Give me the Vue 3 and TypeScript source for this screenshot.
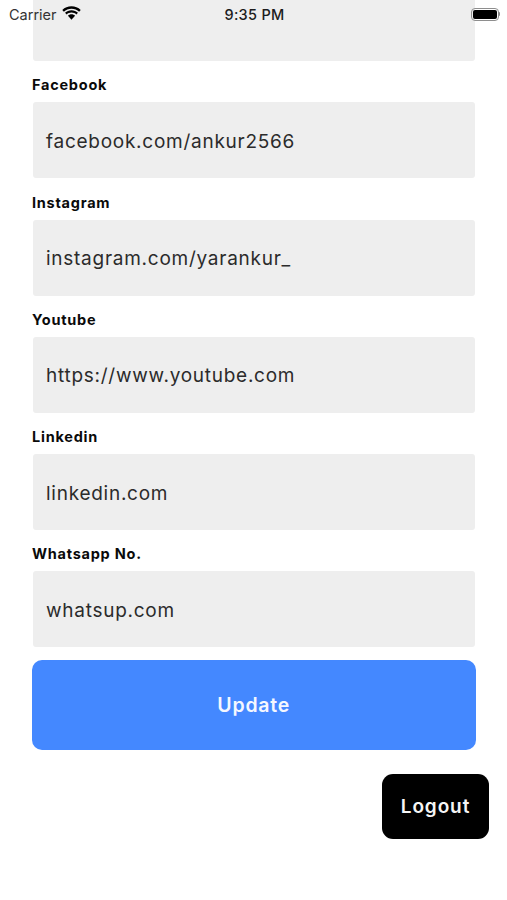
<script setup lang="ts">
const fields: { label: string; value: string }[] = [
  { label: 'Facebook', value: 'facebook.com/ankur2566' },
  { label: 'Instagram', value: 'instagram.com/yarankur_' },
  { label: 'Youtube', value: 'https://www.youtube.com' },
  { label: 'Linkedin', value: 'linkedin.com' },
  { label: 'Whatsapp No.', value: 'whatsup.com' },
]
</script>

<template>
  <div class="page">
    <header class="status">
      <div class="left">
        <span class="carrier">Carrier</span>
        <svg class="wifi" width="19" height="14" viewBox="0 0 20 14" aria-hidden="true">
          <path d="M10 2.400c3.100 0 5.900 1.200 8 3.200l1.700-1.800C17.100 1.400 13.700 0 10 0S2.900 1.400.3 3.800L2 5.600c2.100-2 4.900-3.200 8-3.200z" fill="#000" />
          <path d="M10 6.500c2 0 3.800.8 5.100 2l1.700-1.800C15 5 12.600 4.100 10 4.100S5 5 3.200 6.700l1.700 1.800c1.300-1.200 3.100-2 5.100-2z" fill="#000" />
          <path d="M10 8.400c-1.500 0-2.800.6-3.700 1.500L10 14l3.700-4.100c-.9-.9-2.200-1.500-3.700-1.500z" fill="#000" />
        </svg>
      </div>
      <span class="time">9:35 PM</span>
      <div class="battery"><span class="cell"><span class="charge"></span></span><span class="nub"></span></div>
    </header>

    <main class="form">
      <div class="box first"></div>
      <label v-for="f in fields" :key="f.label" class="field">
        <span class="label">{{ f.label }}</span>
        <span class="box value">{{ f.value }}</span>
      </label>
      <button class="update" type="button">Update</button>
      <div class="actions">
        <button class="logout" type="button">Logout</button>
      </div>
    </main>
  </div>
</template>

<style>
html, body { margin: 0; background: #fff; }
</style>

<style scoped>
.page {
  position: relative;
  width: 507px;
  height: 900px;
  overflow: hidden;
  background: #fff;
  font-family: Inter, "Liberation Sans", sans-serif;
}
.status {
  position: absolute;
  top: 0;
  left: 0;
  right: 0;
  height: 28px;
  display: grid;
  grid-template-columns: 1fr auto 1fr;
  align-items: center;
  padding: 0 7px 0 9px;
  color: #1c1c1c;
}
.left { display: flex; align-items: center; gap: 5px; }
.carrier { font-size: 14.500px; color: #333; }
.wifi { margin-top: -2px; }
.time { font-size: 14.500px; font-weight: 500; letter-spacing: 0.3px; }
.battery { justify-self: end; display: flex; align-items: center; }
.cell {
  width: 28px;
  height: 13px;
  box-sizing: border-box;
  border: 1.500px solid #8e8e8e;
  border-radius: 4px;
  padding: 1px;
  display: flex;
}
.charge { flex: 1; background: #000; border-radius: 2px; }
.nub { width: 1.500px; height: 4px; background: #8e8e8e; border-radius: 0 1px 1px 0; }
.form {
  display: flex;
  flex-direction: column;
  padding: 0 32px 0 32px;
}
.box {
  display: flex;
  align-items: center;
  box-sizing: border-box;
  margin-left: 1px;
  background: #eeeeee;
  border-radius: 3px;
}
.first { height: 61px; border-radius: 0 0 3px 3px; }
.field {
  display: flex;
  flex-direction: column;
  gap: 8px;
  margin-top: 15.300px;
}
.label {
  height: 18px;
  font-size: 14.500px;
  line-height: 18px;
  font-weight: 700;
  letter-spacing: 0.75px;
  color: #0a0a0a;
}
.value {
  height: 76px;
  padding-left: 13px;
  padding-top: 2px;
  font-size: 19px;
  letter-spacing: 0.74px;
  color: #2b2b2b;
}
.update {
  height: 90px;
  margin-top: 13px;
  margin-left: -0.500px;
  margin-right: -1px;
  border: 0;
  border-radius: 10px;
  background: #4488ff;
  color: #f4f7ff;
  font: 600 19.500px Inter, "Liberation Sans", sans-serif;
  letter-spacing: 0.8px;
}
.actions {
  display: flex;
  justify-content: flex-end;
  margin-top: 24px;
  margin-right: -14px;
}
.logout {
  width: 107px;
  height: 65px;
  border: 0;
  border-radius: 11px;
  background: #000;
  color: #f5f5f5;
  font: 600 19px Inter, "Liberation Sans", sans-serif;
  letter-spacing: 0.9px;
}
</style>
